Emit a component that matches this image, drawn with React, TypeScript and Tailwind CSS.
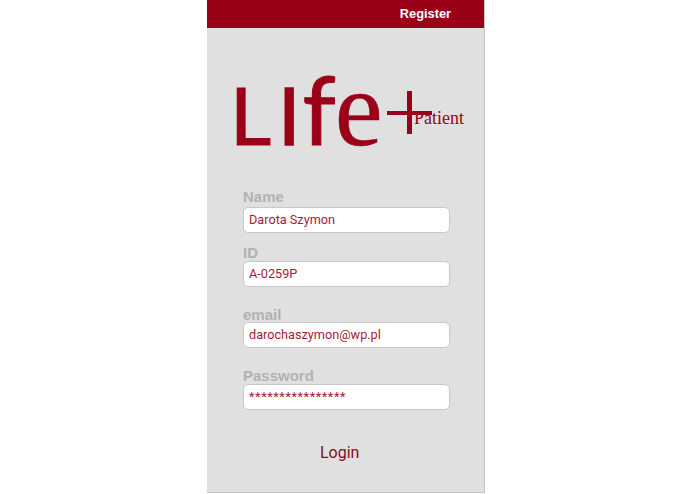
import React from 'react';

const fields = [
    { label: 'Name', value: 'Darota Szymon', wrap: 'mt-[25px]', labelClass: 'mb-[2px]', valueClass: '' },
    { label: 'ID', value: 'A-0259P', wrap: 'mt-[11px]', labelClass: '', valueClass: '' },
    { label: 'email', value: 'darochaszymon@wp.pl', wrap: 'mt-[19px]', labelClass: '-mb-[1px]', valueClass: '' },
    { label: 'Password', value: '****************', wrap: 'mt-[19px]', labelClass: '', valueClass: 'tracking-[0.6px]' },
];

const App: React.FC = () => {
    return (
        <div className="w-[695px] h-[494px] bg-white overflow-hidden pl-[207px] font-['Liberation_Sans',sans-serif]">
            <div className="w-[278px] h-[493px] bg-[#e0e0e0] border-r border-b border-[#c4c4c4] flex flex-col">
                <header className="h-[28px] shrink-0 bg-[#9b0019] flex items-center justify-end pr-[33px]">
                    <span className="text-[12.8px] font-bold text-white">Register</span>
                </header>

                <div className="relative h-[135px] shrink-0">
                    <div className="absolute left-[23px] top-[30px] flex items-baseline h-[100px] leading-[100px] text-[#9b0019] font-['Lato',sans-serif]">
                        <span className="text-[80px] [-webkit-text-stroke:1.2px_#9b0019]">L</span>
                        <span className="text-[80px] ml-[7px] [-webkit-text-stroke:1.6px_#9b0019]">I</span>
                        <span className="text-[95px] ml-[2px] [-webkit-text-stroke:1px_#9b0019]">f</span>
                        <span className="text-[108px] -ml-[1px] font-['Liberation_Serif',serif] [-webkit-text-stroke:0.5px_#9b0019]">e</span>
                    </div>
                    <div className="absolute left-[180px] top-[83px] w-[45px] h-[4px] bg-[#9b0019]" />
                    <div className="absolute left-[200px] top-[63px] w-[5px] h-[43px] bg-[#9b0019]" />
                    <span className="absolute left-[207px] top-[80px] text-[18px] leading-[20px] font-['Liberation_Serif',serif] text-[#9b0019]">
                        Patient
                    </span>
                </div>

                <form className="flex flex-col pl-[36px]">
                    {fields.map((field) => (
                        <div key={field.label} className={field.wrap}>
                            <div className={`text-[15px] leading-[17px] font-bold text-[#b2b2b2] ${field.labelClass}`}>{field.label}</div>
                            <div className={`w-[207px] h-[26px] bg-white border border-[#c9c9c9] rounded-[5px] flex items-center px-[5px] pb-[1px] text-[12.7px] text-[#a51a37] font-['Roboto',sans-serif] ${field.valueClass}`}>
                                {field.value}
                            </div>
                        </div>
                    ))}
                </form>

                <div className="mt-[33px] pl-[113px] text-[16px] leading-[20px] text-[#8c0a24] font-['Roboto',sans-serif]">
                    Login
                </div>
            </div>
        </div>
    );
};

export default App;
